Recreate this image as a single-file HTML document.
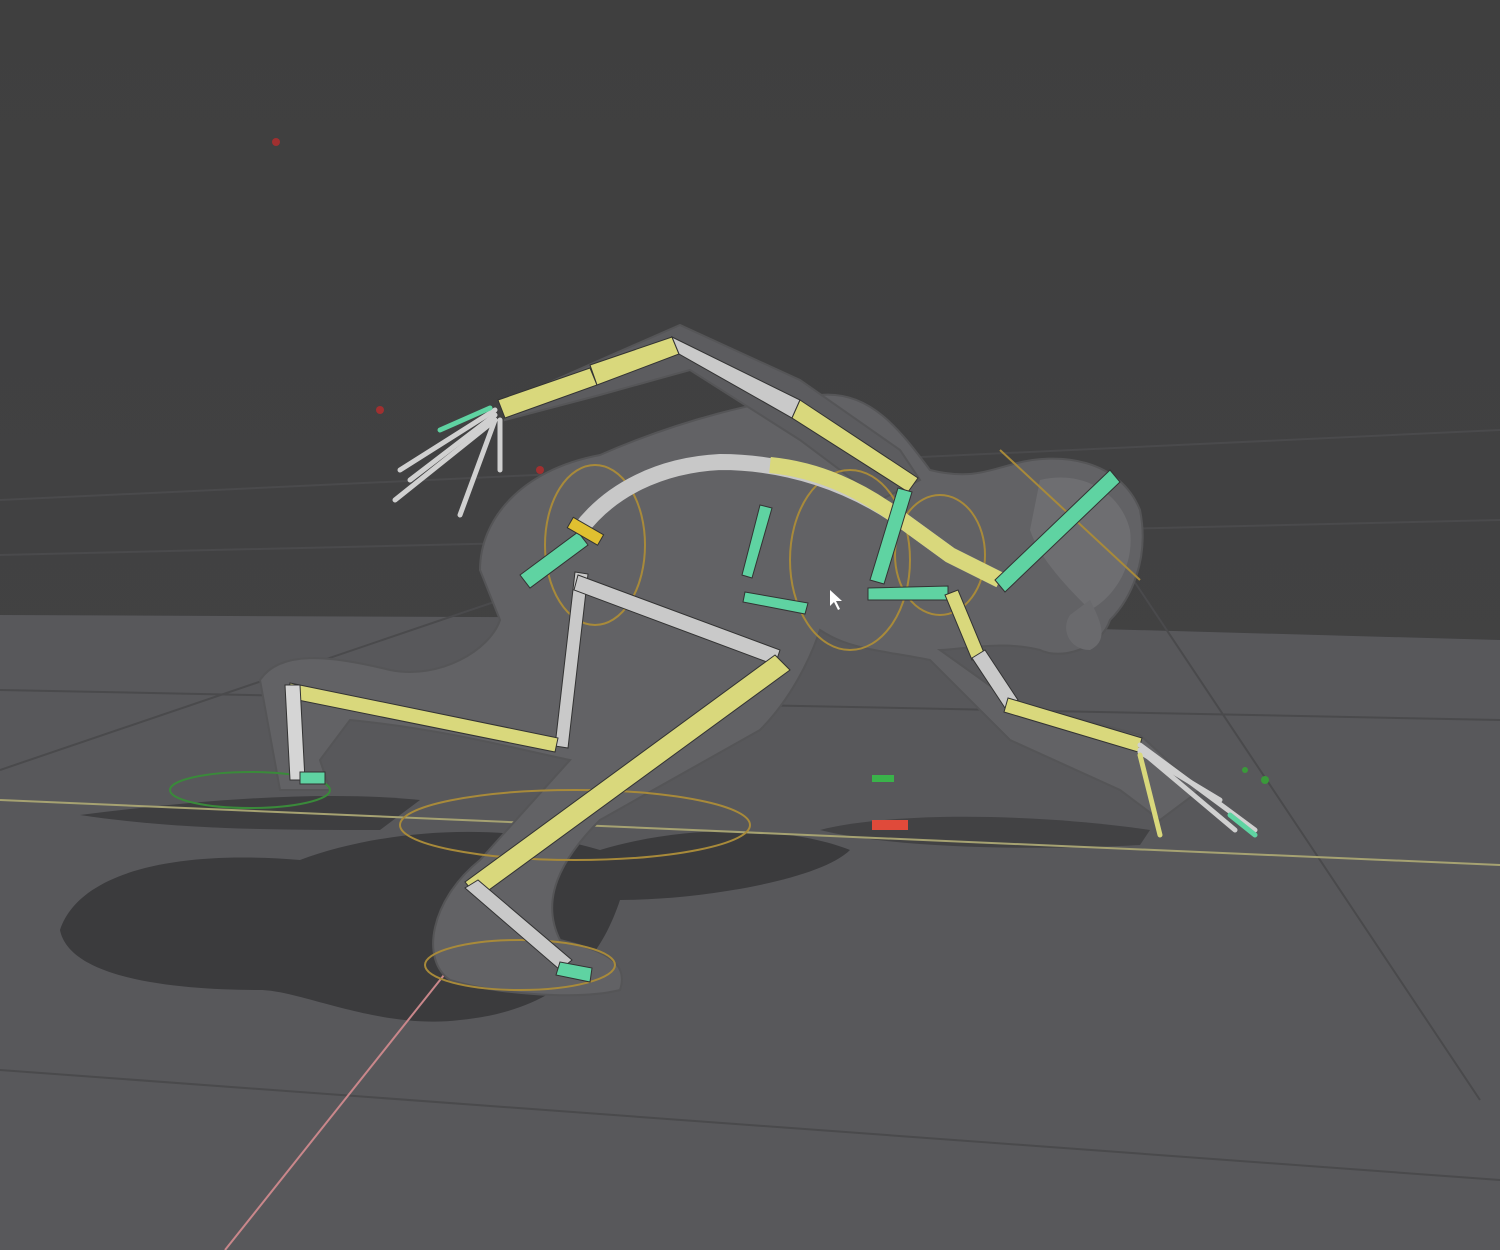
<!DOCTYPE html>
<html><head><meta charset="utf-8"><style>
html,body{margin:0;padding:0;background:#404040;}
svg{display:block}
</style></head><body>
<svg width="1500" height="1250" viewBox="0 0 1500 1250" xmlns="http://www.w3.org/2000/svg">
<defs>
<linearGradient id="bg" x1="0" y1="0" x2="0" y2="1">
<stop offset="0" stop-color="#3f3f3f"/><stop offset="1" stop-color="#444446"/>
</linearGradient>
</defs>
<rect width="1500" height="1250" fill="url(#bg)"/>
<polygon points="0,615 700,618 1500,640 1500,1250 0,1250" fill="#58585b"/>
<g stroke="#4a4a4c" stroke-width="2" fill="none">
<line x1="0" y1="770" x2="500" y2="600"/>
<line x1="0" y1="690" x2="1500" y2="720"/>
<line x1="0" y1="1070" x2="1500" y2="1180"/>
<line x1="1120" y1="560" x2="1480" y2="1100"/>
<line x1="0" y1="555" x2="1500" y2="520"/>
<line x1="0" y1="500" x2="1500" y2="430"/>
</g>
<path d="M60,930 C80,870 180,850 300,860 C380,830 500,820 600,850 C700,820 800,830 850,850 C820,880 700,900 620,900 C600,960 560,1010 460,1020 C380,1030 300,990 260,990 C180,990 70,980 60,930 Z" fill="#3b3b3d"/>
<path d="M80,815 C200,800 320,790 420,800 L380,830 C280,830 180,830 80,815 Z" fill="#3e3e40"/>
<path d="M820,830 C900,810 1050,815 1150,830 L1140,845 C1050,850 900,850 820,830 Z" fill="#424244"/>
<line x1="0" y1="800" x2="1500" y2="865" stroke="#a6a272" stroke-width="2"/>
<line x1="452" y1="965" x2="225" y2="1250" stroke="#c9878b" stroke-width="2"/>
<g fill="#626265" stroke="#555557" stroke-width="2">
<path d="M480,570 C480,520 520,470 600,455 C680,420 760,400 820,395 C870,390 900,430 930,470 C970,480 990,470 1010,465 C1060,450 1120,460 1140,510 C1150,560 1130,600 1110,620 C1100,650 1060,660 1040,650 C1000,640 960,650 940,650 L1010,700 L1140,735 L1200,790 L1160,820 L1120,790 L1010,740 C990,720 960,690 930,660 C880,650 850,650 820,630 C810,660 790,700 760,730 L600,820 C560,860 540,900 560,940 C600,950 630,960 620,990 C580,1000 500,995 450,980 C420,960 430,900 480,860 L570,760 C520,750 450,730 350,720 L320,760 L330,790 L280,790 L260,680 C280,650 330,655 390,670 C440,680 490,650 500,620 Z"/>
<path d="M510,400 L600,360 L680,325 L800,380 L900,450 L920,480 L880,500 L800,440 L690,370 L600,395 L505,420 Z" fill="#5c5c5f"/>
</g>
<path d="M1040,480 C1080,470 1120,490 1130,530 C1135,570 1110,600 1090,610 C1070,590 1040,560 1030,530 Z" fill="#6e6e71"/>
<path d="M1090,600 C1100,620 1110,640 1090,650 C1070,650 1060,630 1070,615 Z" fill="#6a6a6d"/>
<g fill="none" stroke="#a88a3a" stroke-width="2">
<ellipse cx="575" cy="825" rx="175" ry="35"/>
<ellipse cx="520" cy="965" rx="95" ry="25"/>
<ellipse cx="850" cy="560" rx="60" ry="90"/>
<ellipse cx="940" cy="555" rx="45" ry="60"/>
<ellipse cx="595" cy="545" rx="50" ry="80"/>
<line x1="1000" y1="450" x2="1140" y2="580"/>
</g>
<ellipse cx="250" cy="790" rx="80" ry="18" fill="none" stroke="#3a8a3a" stroke-width="2"/>
<g stroke="#333" stroke-width="1">
<polygon points="498,400 590,368 597,385 505,418" fill="#d9d87c"/>
<polygon points="590,365 672,337 679,354 597,385" fill="#d9d87c"/>
<polygon points="672,337 800,400 792,418 679,354" fill="#c9c9c9"/>
<polygon points="800,400 918,478 908,492 792,418" fill="#d9d87c"/>
<path d="M580,530 C610,490 660,465 720,462 C790,462 850,485 895,515 L950,555 L1000,580" fill="none" stroke="#c8c8c8" stroke-width="16"/>
<path d="M770,465 C820,470 860,490 895,515 L950,555 L1000,580" fill="none" stroke="#d9d87c" stroke-width="16"/>
<polygon points="995,580 1110,470 1120,482 1005,592" fill="#5fd3a2"/>
<polygon points="520,575 578,532 588,545 530,588" fill="#5fd3a2"/>
<polygon points="745,592 808,603 805,614 743,602" fill="#5fd3a2"/>
<polygon points="760,505 772,508 752,578 742,575" fill="#5fd3a2"/>
<polygon points="870,580 898,488 912,492 884,584" fill="#5fd3a2"/>
<polygon points="868,588 948,586 948,600 868,600" fill="#5fd3a2"/>
<rect x="568" y="525" width="35" height="12" fill="#e0c030" transform="rotate(30 585 531)"/>
<polygon points="575,572 588,574 568,748 555,746" fill="#c9c9c9"/>
<polygon points="578,575 780,650 775,665 574,590" fill="#c9c9c9"/>
<polygon points="290,683 558,738 555,752 288,698" fill="#d9d87c"/>
<polygon points="285,685 300,685 305,780 290,780" fill="#d5d5d5"/>
<polygon points="300,772 325,772 325,784 300,784" fill="#5fd3a2"/>
<polygon points="775,655 790,670 478,898 465,882" fill="#d9d87c"/>
<polygon points="465,888 478,880 572,960 560,970" fill="#c9c9c9"/>
<polygon points="560,962 592,968 590,982 556,975" fill="#5fd3a2"/>
<polygon points="945,595 958,590 985,655 972,660" fill="#d9d87c"/>
<polygon points="972,658 985,650 1018,700 1005,708" fill="#c9c9c9"/>
<polygon points="1008,698 1142,738 1138,752 1004,712" fill="#d9d87c"/>
</g>
<g stroke-width="5" stroke-linecap="round">
<line x1="1140" y1="745" x2="1255" y2="830" stroke="#d0d0d0"/>
<line x1="1140" y1="750" x2="1235" y2="830" stroke="#d0d0d0"/>
<line x1="1140" y1="752" x2="1220" y2="800" stroke="#d0d0d0"/>
<line x1="1140" y1="755" x2="1160" y2="835" stroke="#d9d87c"/>
<line x1="1230" y1="815" x2="1255" y2="835" stroke="#5fd3a2"/>
<line x1="495" y1="410" x2="400" y2="470" stroke="#d0d0d0"/>
<line x1="495" y1="415" x2="410" y2="480" stroke="#d0d0d0"/>
<line x1="495" y1="420" x2="395" y2="500" stroke="#d0d0d0"/>
<line x1="495" y1="420" x2="460" y2="515" stroke="#d0d0d0"/>
<line x1="490" y1="408" x2="440" y2="430" stroke="#5fd3a2"/>
<line x1="500" y1="420" x2="500" y2="470" stroke="#d0d0d0"/>
</g>
<rect x="872" y="820" width="36" height="10" fill="#e04a3a"/>
<rect x="872" y="775" width="22" height="7" fill="#3ab34a"/>
<circle cx="276" cy="142" r="4" fill="#a03030"/>
<circle cx="380" cy="410" r="4" fill="#a03030"/>
<circle cx="540" cy="470" r="4" fill="#a03030"/>
<circle cx="1265" cy="780" r="4" fill="#3a9a3a"/>
<circle cx="1245" cy="770" r="3" fill="#3a9a3a"/>
<polygon points="830,590 830,606 834,602 838,610 840,609 836,601 842,601" fill="#fff"/>
</svg>
</body></html>
